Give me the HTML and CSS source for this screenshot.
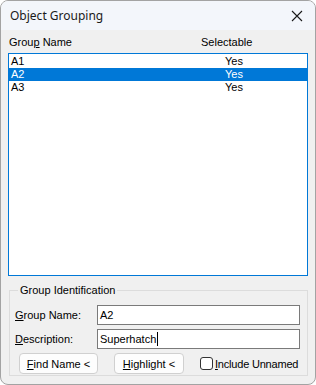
FILE: index.html
```html
<!DOCTYPE html>
<html lang="en">
    <head>
        <meta charset="utf-8"/>
        <title>Object Grouping</title>
        <link rel="stylesheet" href="styles.css">
    </head>
    <body>
        <div class="window">
            <!-- Title bar -->
            <div class="titlebar">
                <span class="title">Object Grouping</span>
                <svg class="close" width="12" height="12" viewBox="0 0 12 12">
                    <path d="M1 1L11 11M11 1L1 11" stroke="#1a1a1a" stroke-width="1.1" fill="none"/>
                </svg>
            </div>

            <div class="content">
                <!-- List -->
                <div class="listhead">
                    <span class="colname">Grou<u>p</u> Name</span>
                    <span class="colsel">Selectable</span>
                </div>
                <div class="listbox">
                    <div class="row"><span class="colname">A1</span><span class="colyes">Yes</span></div>
                    <div class="row selected"><span class="colname">A2</span><span class="colyes">Yes</span></div>
                    <div class="row"><span class="colname">A3</span><span class="colyes">Yes</span></div>
                </div>

                <!-- Group Identification -->
                <fieldset class="groupbox">
                    <legend>Group Identification</legend>
                    <div class="field">
                        <label><u>G</u>roup Name:</label>
                        <div class="textbox">A2</div>
                    </div>
                    <div class="field">
                        <label><u>D</u>escription:</label>
                        <div class="textbox">Superhatch<span class="caret"></span></div>
                    </div>
                    <div class="actions">
                        <button class="btn"><u>F</u>ind Name &lt;</button>
                        <button class="btn"><u>H</u>ighlight &lt;</button>
                        <span class="check"><span class="box"></span><u>I</u>nclude Unnamed</span>
                    </div>
                </fieldset>
            </div>
        </div>
    </body>
</html>
```

FILE: styles.css
```css
body{
    margin: 0;
    background-color: #ffffff;
    font-family: "Liberation Sans", Arial, sans-serif;
    font-size: 11px;
    color: #000;
}

.window{
    box-sizing: border-box;
    width: 316px;
    height: 385px;
    border: 1px solid #a3a3a3;
    border-radius: 8px;
    overflow: hidden;
    background-color: #f0f0f0;
    display: flex;
    flex-direction: column;
}

.titlebar{
    height: 29px;
    background-color: #f3f6fb;
    display: flex;
    align-items: center;
    justify-content: space-between;
    padding: 0 12px 0 9px;
    flex-shrink: 0;
}

.title{
    font-family: "Noto Sans", sans-serif;
    font-size: 12px;
    color: #1a1a1a;
}

.content{
    padding: 0 7px 0 7px;
    display: flex;
    flex-direction: column;
}

.listhead{
    display: flex;
    height: 23px;
    align-items: center;
    padding-top: 1px;
    box-sizing: border-box;
}

.colname{
    width: 192px;
    padding-left: 1px;
}

.listbox{
    height: 223px;
    box-sizing: border-box;
    border: 1px solid #0078d7;
    background-color: #fff;
    padding-top: 1px;
}

.row{
    display: flex;
    height: 13px;
    line-height: 13px;
}

.row .colname{
    width: 214px;
    padding-left: 2px;
}

.row.selected{
    background-color: #0078d7;
    color: #fff;
}

.groupbox{
    margin: 8px 0 0 1px;
    border: 1px solid #dcdcdc;
    border-radius: 0;
    padding: 9px 2px 3px 5px;
    height: 92px;
    box-sizing: border-box;
}

.groupbox legend{
    padding: 0 2px;
    margin-left: 3px;
    font-size: 11px;
}

.field{
    display: flex;
    align-items: center;
    margin-bottom: 4px;
}

.field label{
    width: 82px;
}

.textbox{
    box-sizing: border-box;
    width: 203px;
    height: 20px;
    border: 1px solid #7a7a7a;
    background-color: #fff;
    padding: 0 2px;
    line-height: 18px;
    display: flex;
    align-items: center;
}

.caret{
    display: inline-block;
    width: 1px;
    height: 14px;
    background-color: #000;
    margin-left: 1px;
}

.actions{
    display: flex;
    align-items: center;
    padding-left: 4px;
    white-space: nowrap;
}

.btn{
    box-sizing: border-box;
    width: 79px;
    height: 21px;
    margin-right: 16px;
    border: 1px solid #d0d0d0;
    border-radius: 4px;
    background-color: #fdfdfd;
    font-family: "Liberation Sans", Arial, sans-serif;
    font-size: 11px;
    color: #000;
    padding: 0;
}

.btn + .btn{
    width: 70px;
}

.check{
    display: flex;
    align-items: center;
    letter-spacing: -0.2px;
}

.box{
    box-sizing: border-box;
    width: 13px;
    height: 13px;
    border: 1px solid #333;
    border-radius: 3px;
    background-color: #fff;
    margin-right: 2px;
}
```
